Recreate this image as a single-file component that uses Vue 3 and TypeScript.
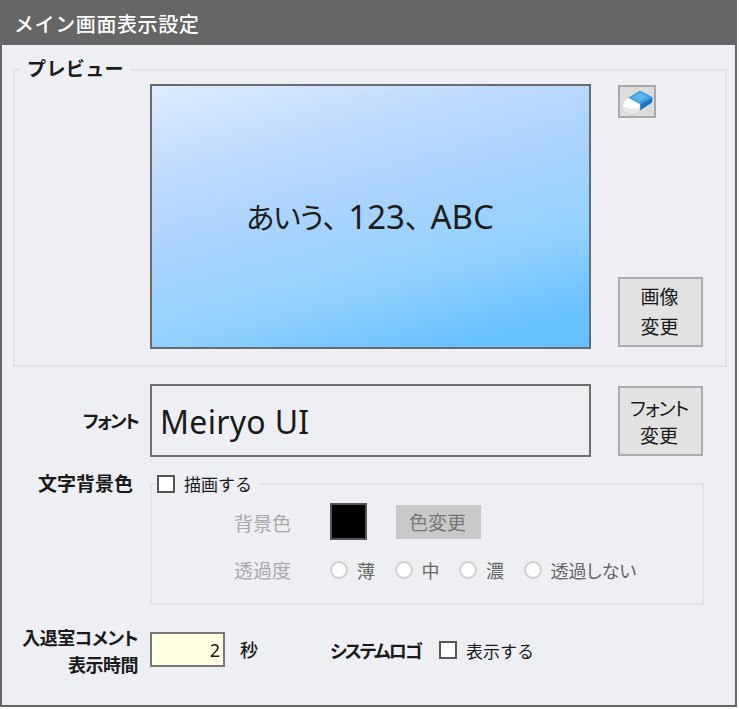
<script setup lang="ts">
const radios: string[] = ['薄', '中', '濃', '透過しない']
</script>

<template>
  <div class="window">
    <header class="title">メイン画面表示設定</header>
    <main class="body">
      <section class="group preview-group">
        <span class="legend">プレビュー</span>
        <div class="preview"><span class="kana">あいう、</span>123<span class="kana">、</span>ABC</div>
        <div class="side">
          <button class="eraser" aria-label="消去">
            <svg width="32" height="26" viewBox="0 0 32 26">
              <path d="M7.300 8.700 L18 2 Q19 1.500 20 2 L31 7.800 Q31.800 8.700 31 9.500 L19 15.300 Z" fill="#3c9fe2" />
              <path d="M11 8.500 L19 3.500 L27 8 L18.500 12.500 Z" fill="#5cb6ee" />
              <path d="M19 15.300 L31.500 8.700 L31 13 Q30.800 13.800 30 14.300 L19 21.500 Z" fill="#1d72bd" />
              <path d="M7.300 8.700 L19 15.300 L19 20 Q17 24.700 11 24.700 Q2.500 24.500 1.300 17.500 Q1.300 11.500 7.300 8.700 Z" fill="#ffffff" stroke="#c4c6ca" stroke-width="0.6" />
              <path d="M1.800 16.500 Q8 21.500 18.500 19 Q17 24.300 11 24.300 Q3 24 1.800 16.500 Z" fill="#e6e8ec" />
            </svg>
          </button>
          <button class="btn tall"><span>画像</span><span>変更</span></button>
        </div>
      </section>

      <section class="font-row">
        <label class="label palt font-label">フォント</label>
        <div class="font-box">Meiryo UI</div>
        <button class="btn font-btn"><span class="palt tight">フォント</span><span>変更</span></button>
      </section>

      <section class="bg-row">
        <label class="label bg-label">文字背景色</label>
        <div class="group bg-group">
          <span class="legend check-legend"><i class="check"></i>描画する</span>
          <div class="line color-line">
            <span class="dim-label lowered">背景色</span>
            <i class="swatch"></i>
            <button class="color-btn">色変更</button>
          </div>
          <div class="line">
            <span class="dim-label">透過度</span>
            <span class="radios">
              <span v-for="r in radios" :key="r" class="radio-item palt"><i class="radio"></i>{{ r }}</span>
            </span>
          </div>
        </div>
      </section>

      <section class="last-row">
        <label class="label two-line palt">入退室コメント<br />表示時間</label>
        <div class="num-input">2</div>
        <span class="unit">秒</span>
        <span class="label palt sys">システムロゴ</span>
        <span class="plain-check"><i class="check"></i>表示する</span>
      </section>
    </main>
  </div>
</template>

<style>
html, body { margin: 0; background: #ffffff; }
</style>

<style scoped>
.window {
  box-sizing: border-box;
  width: 737px;
  height: 707px;
  border: 2px solid #666666;
  border-top: 0;
  background: #eeeff3;
  display: flex;
  flex-direction: column;
  font-family: "Noto Sans CJK JP", "Noto Sans", sans-serif;
  color: #1a1a1a;
}
.title {
  height: 45px;
  margin: 0 -2px;
  padding-left: 14px;
  background: #666666;
  color: #ffffff;
  font-size: 20px;
  font-weight: 500;
  line-height: 48px;
  letter-spacing: 0.6px;
}
.body { flex: 1; display: flex; flex-direction: column; }
.group { position: relative; box-sizing: border-box; border: 2px solid #e1e2e6; }
.legend {
  position: absolute;
  top: -16px;
  left: 4px;
  padding: 0 6px 0 8px;
  background: #eeeff3;
  font-size: 19px;
  font-weight: 700;
  line-height: 26px;
  letter-spacing: 0.4px;
}
.preview-group {
  margin: 24px 8px 0 11px;
  height: 298px;
  padding: 13px 0 0 135px;
  display: flex;
  gap: 27px;
}
.preview {
  box-sizing: border-box;
  width: 441px;
  height: 265px;
  border: 2px solid #666c72;
  background: linear-gradient(165deg, #dfebff 0%, #bfdbfe 24%, #a9d3fd 46%, #92d1fd 68%, #69c1ff 90%, #66c0ff 100%);
  display: flex;
  align-items: center;
  justify-content: center;
  padding: 0 1px 1px 0;
  font-family: "Noto Sans", "Noto Sans CJK JP", sans-serif;
  font-size: 33px;
  color: #1c1c1c;
  white-space: pre;
}
.kana {
  font-family: "Noto Sans CJK JP", sans-serif;
  font-size: 29px;
  font-feature-settings: "palt";
  letter-spacing: -1px;
  padding-right: 12px;
}
.side { display: flex; flex-direction: column; justify-content: space-between; align-items: flex-start; height: 262px; padding-top: 1px; }
button { font-family: inherit; padding: 0; margin: 0; }
.eraser {
  box-sizing: border-box;
  width: 38px;
  height: 33px;
  border: 2px solid #a9a9a9;
  background: #dcdcdc;
  display: flex;
  align-items: center;
  justify-content: center;
}
.btn {
  box-sizing: border-box;
  width: 85px;
  height: 70px;
  border: 2px solid #adadad;
  background: #e2e2e2;
  color: #1a1a1a;
  display: flex;
  flex-direction: column;
  align-items: center;
  justify-content: center;
  font-size: 19px;
}
.tall { gap: 4px; line-height: 26px; padding: 0 2px 3px 0; }
.font-btn { line-height: 27px; margin-top: 2px; margin-left: 15px; padding: 0 3px 1px 0; }
.palt { font-feature-settings: "palt"; }
.tight { letter-spacing: -1px; }
.font-label { letter-spacing: -1.8px; }
.font-row {
  margin-top: 17px;
  display: grid;
  grid-template-columns: 136px 441px 85px;
  column-gap: 12px;
  align-items: start;
}
.label { font-size: 18px; font-weight: 700; text-align: right; line-height: 26px; white-space: nowrap; }
.font-row > .label { padding-top: 23px; }
.font-box {
  box-sizing: border-box;
  width: 441px;
  height: 73px;
  border: 2px solid #6f6f6f;
  background: #eeeff3;
  padding-left: 8px;
  font-family: "Noto Sans", sans-serif;
  font-size: 32px;
  line-height: 72px;
  letter-spacing: 0.3px;
}
.bg-row { margin-top: 26px; display: flex; align-items: flex-start; }
.bg-label { width: 131px; margin-top: -13px; font-size: 19px; letter-spacing: 0; }
.bg-group {
  margin-left: 17px;
  width: 554px;
  height: 122px;
  padding: 18px 0 0 82px;
}
.check-legend {
  top: -14px;
  left: 4px;
  padding: 0 8px 0 1px;
  font-size: 17px;
  font-weight: 400;
  display: flex;
  align-items: center;
  letter-spacing: 0;
}
.check {
  box-sizing: border-box;
  display: inline-block;
  width: 18px;
  height: 18px;
  border: 2px solid #555555;
  background: #ffffff;
  margin-right: 9px;
}
.line { display: flex; align-items: center; }
.color-line { height: 37px; margin-bottom: 17px; }
.dim-label { width: 96px; font-size: 19px; color: #a9a9a9; line-height: 26px; }
.lowered { margin-top: 3px; }
.swatch { box-sizing: border-box; width: 37px; height: 37px; background: #000000; border: 2px solid #555555; }
.color-btn {
  box-sizing: border-box;
  width: 85px;
  height: 34px;
  margin-left: 29px;
  padding-right: 2px;
  border: 0;
  background: #c9c9c9;
  color: #777777;
  font-size: 19px;
}
.radios { display: flex; gap: 19.5px; font-size: 18px; color: #666666; line-height: 26px; }
.radio-item { display: flex; align-items: center; }
.radio {
  box-sizing: border-box;
  display: inline-block;
  width: 18px;
  height: 18px;
  margin-right: 9px;
  border: 2px solid #cfcfd2;
  border-radius: 50%;
  background: #ffffff;
}
.last-row { margin-top: 25px; display: flex; align-items: center; height: 38px; }
.two-line { width: 136px; line-height: 27px; margin-top: 3px; letter-spacing: -0.5px; }
.num-input {
  box-sizing: border-box;
  width: 75px;
  height: 35px;
  margin-left: 12px;
  border: 2px solid #777777;
  background: #ffffe2;
  text-align: right;
  padding-right: 3px;
  font-family: "Noto Sans", sans-serif;
  font-size: 18px;
  line-height: 33px;
  letter-spacing: 0;
}
.unit { margin-left: 15px; font-size: 18px; font-weight: 500; width: 90px; }
.sys { letter-spacing: -1.9px; margin-top: 2px; }
.plain-check { margin-left: 18px; margin-top: 2px; display: flex; align-items: center; font-size: 17px; }
</style>
